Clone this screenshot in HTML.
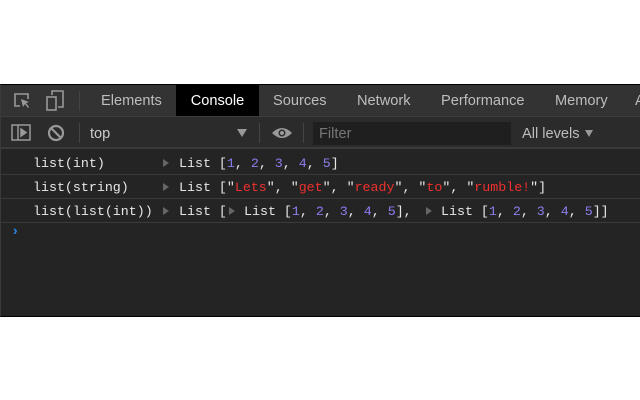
<!DOCTYPE html><html><head><style>
*{margin:0;padding:0;box-sizing:border-box}
body{width:640px;height:400px;background:#fff;position:relative;overflow:hidden;font-family:"Liberation Sans",sans-serif}
#p{position:absolute;left:0;top:84px;width:640px;height:233px;background:#242424;border-top:1px solid #000;border-bottom:1px solid #000;border-left:1px solid #3a3a3a}
#tabs{position:absolute;top:0;left:0;right:0;height:32px;background:#333;border-bottom:1px solid #3d3d3d}
.t{position:absolute;top:0;height:31px;line-height:33px;color:#bdbdbd;font-size:14.6px}
#tb{position:absolute;top:32px;left:0;right:0;height:32px;background:#2b2b2b;border-bottom:2px solid #3a3a3a}
#tb .t{line-height:35px}
.m{position:absolute;font-family:"Liberation Mono",monospace;font-size:13.3px;color:#e8e8e8;white-space:pre;line-height:15px;top:5px}
.row{position:absolute;left:0;right:0;height:24px;border-bottom:1px solid #3a3a3a}
.n{color:#8b7ff0}.s{color:#f1302f}
.a{position:absolute;top:8px;width:0;height:0;border-top:4px solid transparent;border-bottom:4px solid transparent;border-left:6px solid #666}
</style></head><body><div id="p">
<div id="tabs">
<svg style="position:absolute;left:12px;top:7px" width="20" height="18" fill="none" stroke="#999" stroke-width="1.6"><path d="M7 14H2V2h13v5"/><path d="M8 7l8 3-3 1 3 4-1 1-3-4-2 3z" fill="#999" stroke="none"/></svg>
<svg style="position:absolute;left:44px;top:5px" width="20" height="22" fill="none" stroke="#999" stroke-width="1.6"><path d="M7 5V1h11v16h-5"/><rect x="2" y="7" width="9" height="13"/></svg>
<div style="position:absolute;left:78px;top:6px;width:1px;height:20px;background:#444"></div>
<div class="t" style="left:100px">Elements</div>
<div class="t" style="left:175px;width:83px;background:#000;color:#fff;text-align:center">Console</div>
<div class="t" style="left:272px">Sources</div>
<div class="t" style="left:356px">Network</div>
<div class="t" style="left:440px">Performance</div>
<div class="t" style="left:554px">Memory</div>
<div class="t" style="left:634px">A</div>
</div>
<div id="tb">
<svg style="position:absolute;left:10px;top:7px" width="20" height="18" fill="none" stroke="#999" stroke-width="1.5"><rect x="1" y="1" width="18" height="15"/><path d="M7 1v15"/><path d="M10 5l5 3.5-5 3.5z" fill="#999"/></svg>
<svg style="position:absolute;left:46px;top:7px" width="18" height="18" fill="none" stroke="#999" stroke-width="2.2"><circle cx="9" cy="9" r="7"/><path d="M4 4l10 10"/></svg>
<div style="position:absolute;left:78px;top:6px;width:1px;height:20px;background:#444"></div>
<div class="t" style="left:89px;top:0;color:#ccc">top</div>
<div style="position:absolute;left:236px;top:12px;border-left:5px solid transparent;border-right:5px solid transparent;border-top:8px solid #999"></div>
<div style="position:absolute;left:258px;top:6px;width:1px;height:20px;background:#444"></div>
<svg style="position:absolute;left:270px;top:9px" width="22" height="14"><path d="M1 7Q11-3 21 7Q11 17 1 7z" fill="#999"/><circle cx="11" cy="7" r="3.5" fill="#2b2b2b"/><circle cx="11" cy="7" r="2" fill="#999"/></svg>
<div style="position:absolute;left:302px;top:6px;width:1px;height:20px;background:#444"></div>
<div style="position:absolute;left:312px;top:5px;width:198px;height:23px;background:#1f1f1f;color:#777;font-size:14.6px;line-height:25px;padding-left:6px">Filter</div>
<div class="t" style="left:521px;color:#bdbdbd">All levels</div>
<div style="position:absolute;left:584px;top:13px;border-left:4px solid transparent;border-right:4px solid transparent;border-top:7px solid #999"></div>
</div>
<div class="row" style="top:66px"><div class="m" style="left:32px">list(int)</div><div class="a" style="left:162px"></div><div class="m" style="left:178px">List [<span class="n">1</span>, <span class="n">2</span>, <span class="n">3</span>, <span class="n">4</span>, <span class="n">5</span>]</div></div>
<div class="row" style="top:90px"><div class="m" style="left:32px">list(string)</div><div class="a" style="left:162px"></div><div class="m" style="left:178px">List ["<span class="s">Lets</span>", "<span class="s">get</span>", "<span class="s">ready</span>", "<span class="s">to</span>", "<span class="s">rumble!</span>"]</div></div>
<div class="row" style="top:114px"><div class="m" style="left:32px">list(list(int))</div><div class="a" style="left:162px"></div><div class="m" style="left:178px">List [</div><div class="a" style="left:228px"></div><div class="m" style="left:243px">List [<span class="n">1</span>, <span class="n">2</span>, <span class="n">3</span>, <span class="n">4</span>, <span class="n">5</span>],</div><div class="a" style="left:425px"></div><div class="m" style="left:440px">List [<span class="n">1</span>, <span class="n">2</span>, <span class="n">3</span>, <span class="n">4</span>, <span class="n">5</span>]]</div></div>
<div class="m" style="left:10px;top:140px;color:#2a8af0;font-weight:bold;font-size:14px">›</div>
</div></body></html>
